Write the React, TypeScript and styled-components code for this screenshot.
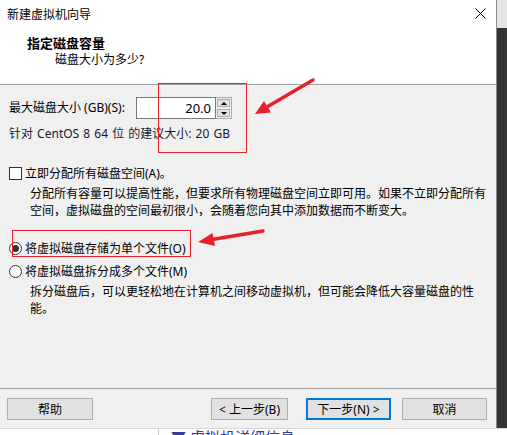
import React from "react";
import styled, { createGlobalStyle } from "styled-components";

const GlobalStyle = createGlobalStyle`
  html, body {
    margin: 0;
    padding: 0;
  }
  body {
    width: 507px;
    height: 435px;
    overflow: hidden;
    background: #ffffff;
    font-family: "Noto Sans", "Noto Sans CJK SC", sans-serif;
    font-size: 12px;
    color: #000000;
  }
`;

const Screen = styled.div`
  width: 507px;
  height: 435px;
  display: flex;
  flex-direction: column;
  overflow: hidden;
`;

const Top = styled.div`
  height: 429px;
  display: flex;
`;

const Dialog = styled.div`
  position: relative;
  width: 496px;
  display: flex;
  flex-direction: column;
  background: #f0f0f0;
`;

const SideStrip = styled.div`
  flex: 1;
  display: flex;
  flex-direction: column;
  background: #353535;
  border-left: 1px solid #8a8a8a;
`;

const SideLight = styled.div`
  height: 28px;
  background: #e4e4e4;
`;

const Header = styled.header`
  height: 84px;
  background: #ffffff;
  border-bottom: 1px solid #a0a0a0;
  display: flex;
  flex-direction: column;
`;

const TitleBar = styled.div`
  height: 27px;
  padding: 0 10px 0 7px;
  display: flex;
  align-items: center;
  justify-content: space-between;
  font-size: 12px;
`;

const Heading = styled.div`
  margin-top: 7px;
  padding-left: 27px;
  line-height: 18px;
  font-size: 13px;
  font-weight: bold;
`;

const SubHeading = styled.div`
  padding-left: 55px;
  line-height: 16px;
`;

const Body = styled.main`
  flex: 1;
  display: flex;
  flex-direction: column;
  padding-left: 9px;
`;

const SizeRow = styled.div`
  margin-top: 12px;
  height: 22px;
  display: flex;
  align-items: center;
`;

const Label = styled.label`
  width: 127px;
  line-height: 16px;
`;

const NumberBox = styled.div`
  width: 80px;
  height: 22px;
  box-sizing: border-box;
  border: 1px solid #7a7a7a;
  background: #ffffff;
  display: flex;
  align-items: center;
  justify-content: flex-end;
  padding-right: 4px;
  font-size: 13px;
`;

const Spinner = styled.div`
  width: 16px;
  height: 22px;
  box-sizing: border-box;
  border: 1px solid #adadad;
  border-left: none;
  display: flex;
  flex-direction: column;
  background: #f0f0f0;
`;

const SpinButton = styled.div<{ $down?: boolean }>`
  flex: 1;
  margin: 1px;
  border: 1px solid #adadad;
  background: #e1e1e1;
  display: flex;
  align-items: center;
  justify-content: center;
  &::after {
    content: "";
    width: 0;
    height: 0;
    border-left: 3px solid transparent;
    border-right: 3px solid transparent;
    ${(p) => (p.$down ? "border-top: 3px solid #000;" : "border-bottom: 3px solid #000;")}
  }
`;

const Hint = styled.div`
  margin-top: 7px;
  line-height: 16px;
  word-spacing: 1px;
  color: #1a1a2e;
`;

const OptionRow = styled.div<{ $top: number }>`
  margin-top: ${(p) => p.$top}px;
  height: 18px;
  display: flex;
  align-items: center;
  gap: 3px;
`;

const CheckBox = styled.span`
  width: 13px;
  height: 13px;
  box-sizing: border-box;
  border: 1px solid #333333;
  background: #ffffff;
`;

const Radio = styled.span<{ $checked?: boolean }>`
  width: 13px;
  height: 13px;
  box-sizing: border-box;
  border: 1px solid #333333;
  border-radius: 50%;
  background: #ffffff;
  display: flex;
  align-items: center;
  justify-content: center;
  &::after {
    content: "";
    width: 7px;
    height: 7px;
    border-radius: 50%;
    background: ${(p) => (p.$checked ? "#333333" : "transparent")};
  }
`;

const Description = styled.p`
  margin: 3px 0 0;
  padding-left: 21px;
  padding-right: 8px;
  line-height: 17px;
`;

const Footer = styled.footer`
  height: 40px;
  box-sizing: border-box;
  border-top: 1px solid #a0a0a0;
  padding: 9px 9px 0 7px;
  display: flex;
  align-items: flex-start;
`;

const Button = styled.button<{ $width: number; $gap?: number; $primary?: boolean }>`
  width: ${(p) => p.$width}px;
  height: 22px;
  margin-left: ${(p) => p.$gap ?? 0}px;
  box-sizing: border-box;
  border: ${(p) => (p.$primary ? "2px solid #0078d7" : "1px solid #adadad")};
  background: #e1e1e1;
  font-family: "Noto Sans", "Noto Sans CJK SC", sans-serif;
  font-size: 12px;
  color: #000000;
  padding: 0;
`;

const Spacer = styled.div`
  flex: 1;
`;

const Annotations = styled.svg`
  position: absolute;
  left: 0;
  top: 0;
  width: 496px;
  height: 429px;
  pointer-events: none;
`;

const Behind = styled.div`
  height: 6px;
  display: flex;
  background: #ffffff;
  border-top: 1px solid #d6d6d6;
  overflow: hidden;
`;

const BehindPane = styled.div`
  width: 158px;
  border-right: 1px solid #c8c8c8;
`;

const BehindTitle = styled.div`
  margin: -1px 0 0 12px;
  font-size: 15px;
  line-height: 18px;
  color: #3b3b9a;
  white-space: nowrap;
`;

export default function App() {
  return (
    <Screen>
      <GlobalStyle />
      <Top>
        <Dialog>
          <Header>
            <TitleBar>
              <span>新建虚拟机向导</span>
              <svg width="11" height="11" viewBox="0 0 11 11">
                <path d="M0.5 0.5 L10.5 10.5 M10.5 0.5 L0.5 10.5" stroke="#000" strokeWidth="1" fill="none" />
              </svg>
            </TitleBar>
            <Heading>指定磁盘容量</Heading>
            <SubHeading>磁盘大小为多少?</SubHeading>
          </Header>

          <Body>
            <SizeRow>
              <Label>最大磁盘大小 (GB)(S):</Label>
              <NumberBox>20.0</NumberBox>
              <Spinner>
                <SpinButton />
                <SpinButton $down />
              </Spinner>
            </SizeRow>
            <Hint>针对 CentOS 8 64 位 的建议大小: 20 GB</Hint>

            <OptionRow $top={22}>
              <CheckBox />
              <span>立即分配所有磁盘空间(A)。</span>
            </OptionRow>
            <Description>
              分配所有容量可以提高性能，但要求所有物理磁盘空间立即可用。如果不立即分配所有
              空间，虚拟磁盘的空间最初很小，会随着您向其中添加数据而不断变大。
            </Description>

            <OptionRow $top={20}>
              <Radio $checked />
              <span>将虚拟磁盘存储为单个文件(O)</span>
            </OptionRow>
            <OptionRow $top={5}>
              <Radio />
              <span>将虚拟磁盘拆分成多个文件(M)</span>
            </OptionRow>
            <Description>
              拆分磁盘后，可以更轻松地在计算机之间移动虚拟机，但可能会降低大容量磁盘的性
              能。
            </Description>
          </Body>

          <Footer>
            <Button $width={86}>帮助</Button>
            <Spacer />
            <Button $width={77}>&lt; 上一步(B)</Button>
            <Button $width={85} $gap={18} $primary>
              下一步(N) &gt;
            </Button>
            <Button $width={85} $gap={11}>取消</Button>
          </Footer>

          <Annotations viewBox="0 0 496 429">
            <rect x="158.5" y="83.5" width="88" height="69" fill="none" stroke="#e8202a" strokeWidth="1" />
            <rect x="12.5" y="230.5" width="178" height="26" fill="none" stroke="#e8202a" strokeWidth="1" />
            <path d="M313 80 L266 107.5" stroke="#e8202a" strokeWidth="3.5" strokeLinecap="round" />
            <polygon points="255,114 271,112.5 264,101" fill="#e8202a" />
            <path d="M263 231 L212 239.5" stroke="#e8202a" strokeWidth="3.5" strokeLinecap="round" />
            <polygon points="198,242 215,246 212.5,233" fill="#e8202a" />
          </Annotations>
        </Dialog>
        <SideStrip>
          <SideLight />
        </SideStrip>
      </Top>
      <Behind>
        <BehindPane />
        <BehindTitle>▼ 虚拟机详细信息</BehindTitle>
      </Behind>
    </Screen>
  );
}
